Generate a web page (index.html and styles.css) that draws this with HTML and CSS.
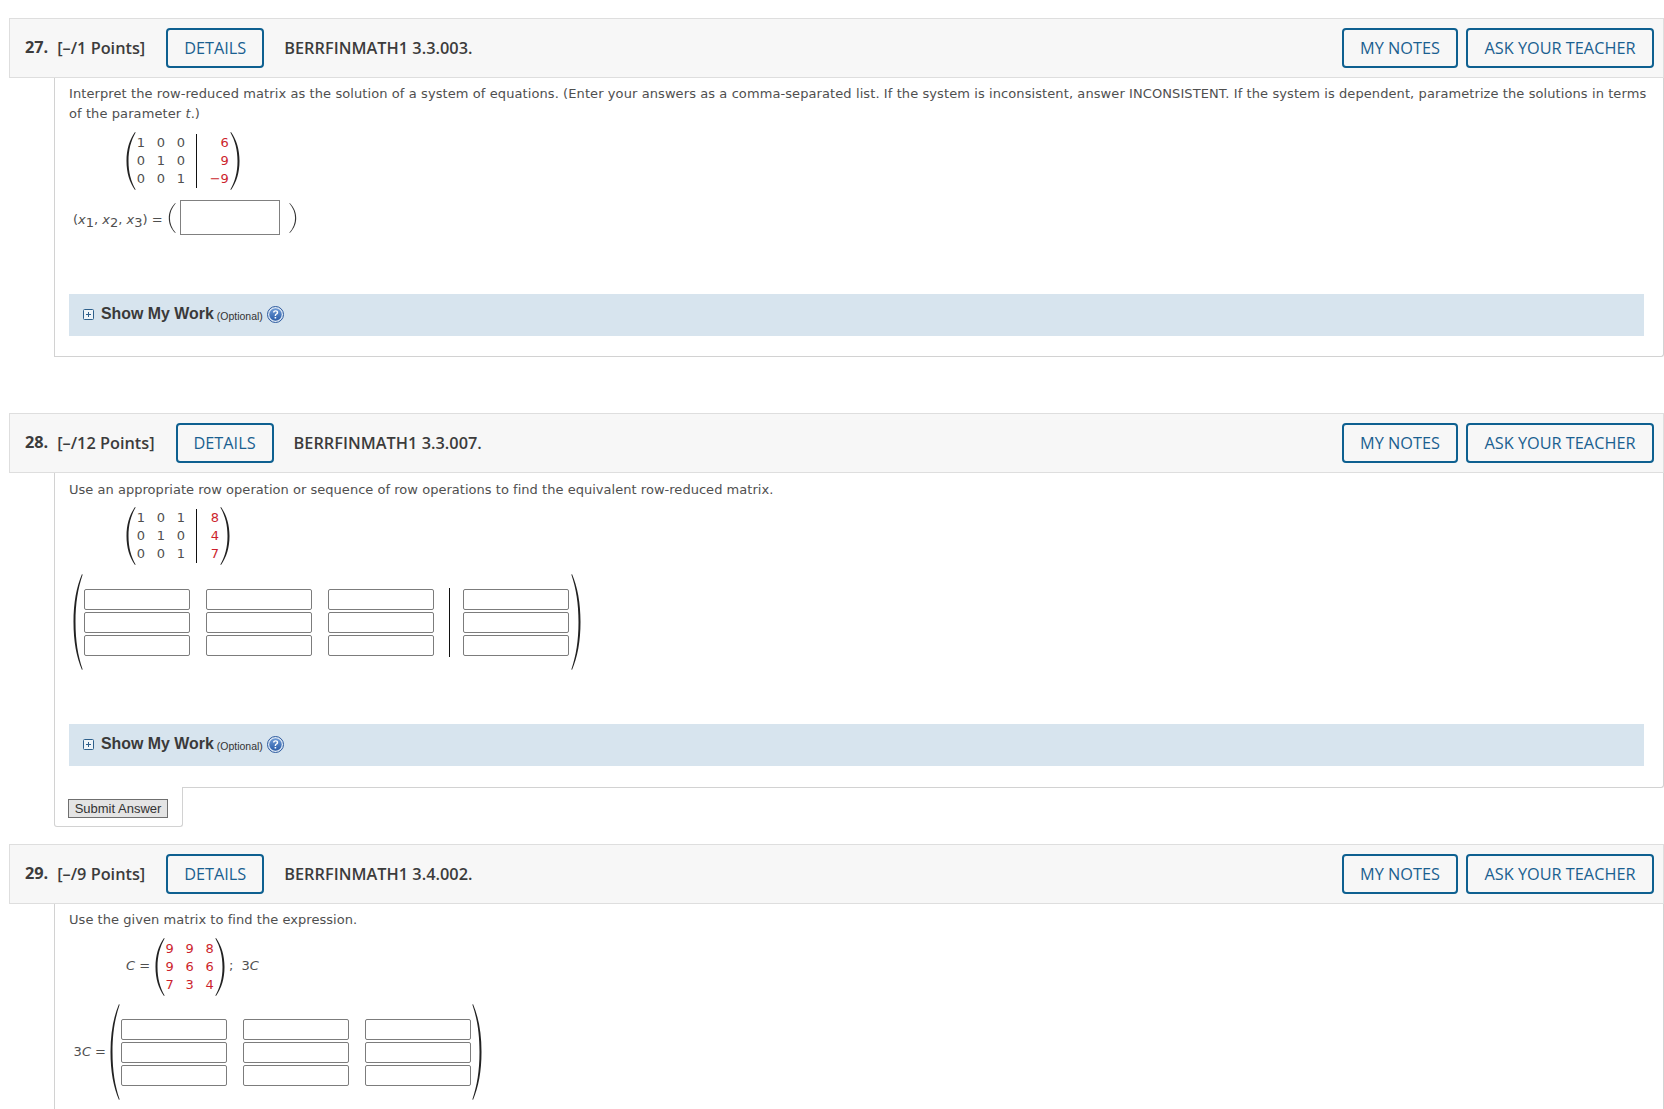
FILE: index.html
```html
<!DOCTYPE html>
<html lang="en">
<head>
<meta charset="utf-8">
<title>Questions</title>
<link rel="stylesheet" href="styles.css">
</head>
<body>
<svg class="defs" width="0" height="0" aria-hidden="true">
  <defs>
    <linearGradient id="helpfill" x1="0" y1="0" x2="0" y2="1"><stop offset="0" stop-color="#6f9bd6"/><stop offset="1" stop-color="#2a5ca8"/></linearGradient>
  </defs>
  <symbol id="lp" viewBox="0 0 10 60" preserveAspectRatio="none"><path d="M9 0C3.5 8 .5 18 .5 30C.5 42 3.5 52 9 60L9.6 59.6C5 51 2.5 42 2.5 30C2.5 18 5 9 9.6 .4Z"/></symbol>
  <symbol id="lpt" viewBox="0 0 10 60" preserveAspectRatio="none"><path d="M9 0C3 10 1 20 1 30C1 40 3 50 9 60L9.6 59.6C4.5 50 2.4 40 2.4 30C2.4 20 4.5 10 9.6 .4Z"/></symbol>
  <symbol id="help" viewBox="0 0 17 17"><circle cx="8.5" cy="8.5" r="8" fill="#dce7f4" stroke="#2c5a9e" stroke-width="1"/><circle cx="8.5" cy="8.5" r="6.2" fill="url(#helpfill)"/><path d="M6 6.6C6.1 5 7.1 4.2 8.6 4.2C10.2 4.2 11.2 5.1 11.2 6.4C11.2 7.4 10.6 8 9.9 8.5C9.2 8.9 9.1 9.2 9.1 10H7.7C7.7 8.9 8 8.4 8.7 7.8C9.4 7.3 9.7 7 9.7 6.4C9.7 5.8 9.3 5.4 8.6 5.4C7.9 5.4 7.5 5.9 7.4 6.6ZM7.6 10.9H9.2V12.5H7.6Z" fill="#fff"/></symbol>
  <symbol id="plus" viewBox="0 0 11 11"><rect x=".5" y=".5" width="10" height="10" rx="1" fill="#eef4f9" stroke="#2d5f8b"/><path d="M3 5.5H8M5.5 3V8" stroke="#2d5f8b" fill="none"/></symbol>
</svg>

<section class="question q27">
  <header class="q-head">
    <span class="q-num">27.</span>
    <span class="q-points">[–/1 Points]</span>
    <button class="btn btn-details">DETAILS</button>
    <span class="q-title">BERRFINMATH1 3.3.003.</span>
    <button class="btn btn-notes">MY NOTES</button>
    <button class="btn btn-ask">ASK YOUR TEACHER</button>
  </header>
  <div class="q-body">
    <p class="prompt">Interpret the row-reduced matrix as the solution of a system of equations. (Enter your answers as a comma-separated list. If the system is inconsistent, answer INCONSISTENT. If the system is dependent, parametrize the solutions in terms of the parameter <i>t</i>.)</p>
    <div class="matrix">
      <svg class="paren"><use href="#lp"/></svg>
      <div class="cells">
        <span>1</span><span>0</span><span>0</span>
        <span>0</span><span>1</span><span>0</span>
        <span>0</span><span>0</span><span>1</span>
      </div>
      <div class="augment">
        <span>6</span><span>9</span><span>−9</span>
      </div>
      <svg class="paren flip"><use href="#lp"/></svg>
    </div>
    <div class="equation">
      <span class="math">(<i>x</i><sub>1</sub>, <i>x</i><sub>2</sub>, <i>x</i><sub>3</sub>) =</span>
      <svg class="paren-thin"><use href="#lpt"/></svg>
      <input class="answer-wide" type="text" aria-label="answer">
      <svg class="paren-thin flip"><use href="#lpt"/></svg>
    </div>
    <div class="show-work">
      <svg class="plus"><use href="#plus"/></svg>
      <span class="sw-label">Show My Work</span>
      <span class="sw-opt">(Optional)</span>
      <svg class="help"><use href="#help"/></svg>
    </div>
  </div>
</section>

<section class="question q28">
  <header class="q-head">
    <span class="q-num">28.</span>
    <span class="q-points">[–/12 Points]</span>
    <button class="btn btn-details">DETAILS</button>
    <span class="q-title">BERRFINMATH1 3.3.007.</span>
    <button class="btn btn-notes">MY NOTES</button>
    <button class="btn btn-ask">ASK YOUR TEACHER</button>
  </header>
  <div class="q-body">
    <p class="prompt">Use an appropriate row operation or sequence of row operations to find the equivalent row-reduced matrix.</p>
    <div class="matrix">
      <svg class="paren"><use href="#lp"/></svg>
      <div class="cells">
        <span>1</span><span>0</span><span>1</span>
        <span>0</span><span>1</span><span>0</span>
        <span>0</span><span>0</span><span>1</span>
      </div>
      <div class="augment">
        <span>8</span><span>4</span><span>7</span>
      </div>
      <svg class="paren flip"><use href="#lp"/></svg>
    </div>
    <div class="big-matrix bm-28">
      <svg class="paren-big"><use href="#lp"/></svg>
      <div class="inputs cols-3">
        <input type="text" aria-label="r1c1"><input type="text" aria-label="r1c2"><input type="text" aria-label="r1c3">
        <input type="text" aria-label="r2c1"><input type="text" aria-label="r2c2"><input type="text" aria-label="r2c3">
        <input type="text" aria-label="r3c1"><input type="text" aria-label="r3c2"><input type="text" aria-label="r3c3">
      </div>
      <div class="inputs cols-1 augmented">
        <input type="text" aria-label="r1c4">
        <input type="text" aria-label="r2c4">
        <input type="text" aria-label="r3c4">
      </div>
      <svg class="paren-big flip"><use href="#lp"/></svg>
    </div>
    <div class="show-work">
      <svg class="plus"><use href="#plus"/></svg>
      <span class="sw-label">Show My Work</span>
      <span class="sw-opt">(Optional)</span>
      <svg class="help"><use href="#help"/></svg>
    </div>
  </div>
  <div class="q-foot"><button class="submit">Submit Answer</button></div>
</section>

<section class="question q29">
  <header class="q-head">
    <span class="q-num">29.</span>
    <span class="q-points">[–/9 Points]</span>
    <button class="btn btn-details">DETAILS</button>
    <span class="q-title">BERRFINMATH1 3.4.002.</span>
    <button class="btn btn-notes">MY NOTES</button>
    <button class="btn btn-ask">ASK YOUR TEACHER</button>
  </header>
  <div class="q-body">
    <p class="prompt">Use the given matrix to find the expression.</p>
    <div class="matrix">
      <span class="math m-lead"><i>C</i> =</span>
      <svg class="paren"><use href="#lp"/></svg>
      <div class="cells red">
        <span>9</span><span>9</span><span>8</span>
        <span>9</span><span>6</span><span>6</span>
        <span>7</span><span>3</span><span>4</span>
      </div>
      <svg class="paren flip"><use href="#lp"/></svg>
      <span class="math m-tail">;&nbsp; 3<i>C</i></span>
    </div>
    <div class="big-matrix bm-29">
      <span class="math bm-lead">3<i>C</i> =</span>
      <svg class="paren-big"><use href="#lp"/></svg>
      <div class="inputs cols-3">
        <input type="text" aria-label="r1c1"><input type="text" aria-label="r1c2"><input type="text" aria-label="r1c3">
        <input type="text" aria-label="r2c1"><input type="text" aria-label="r2c2"><input type="text" aria-label="r2c3">
        <input type="text" aria-label="r3c1"><input type="text" aria-label="r3c2"><input type="text" aria-label="r3c3">
      </div>
      <svg class="paren-big flip"><use href="#lp"/></svg>
    </div>
  </div>
</section>
</body>
</html>
```

FILE: styles.css
```css
html, body { margin: 0; padding: 0; }
body {
  height: 1109px;
  overflow: hidden;
  background: #fff;
  color: #4f4f4f;
  font-family: "DejaVu Sans", Verdana, sans-serif;
  font-size: 13px;
}
.defs { display: block; height: 0; }

.question { margin-left: 9px; }
.q27 { padding-top: 18px; }
.q28 { margin-top: 56px; }
.q29 { margin-top: 17px; }

.q-head {
  box-sizing: border-box;
  height: 60px;
  display: flex;
  align-items: center;
  padding: 0 9px 0 15px;
  background: #f7f7f7;
  border: 1px solid #dedede;
  font-family: "Open Sans", sans-serif;
  font-size: 16.3px;
  color: #3c3c3c;
}
.q-num { font-weight: 700; margin-right: 9px; padding-bottom: 2px; }
.q-points { font-weight: 650; margin-right: 21px; }
.q-title { font-weight: 650; margin-left: 20px; margin-right: auto; letter-spacing: .03px; }

.btn {
  box-sizing: border-box;
  height: 40px;
  padding: 0;
  background: transparent;
  border: 2px solid #0e6090;
  border-radius: 4px;
  color: #1a6090;
  font-family: "Open Sans", sans-serif;
  font-size: 16.3px;
  font-weight: 500;
}
.btn-details { width: 98px; }
.btn-notes { width: 116px; margin-right: 8px; }
.btn-ask { width: 188px; }

.q-body {
  margin-left: 45px;
  padding: 6px 19px 20px 14px;
  border-left: 1px solid #d2d2d2;
  border-right: 1px solid #d2d2d2;
  border-bottom: 1px solid #d2d2d2;
  border-bottom-right-radius: 3px;
}
.q28 .q-body { padding-top: 7px; padding-bottom: 21px; }
.q29 .q-body { border-bottom: 0; padding-bottom: 30px; }

.prompt { margin: 0 -12px 0 0; line-height: 20px; }
.q27 .prompt { letter-spacing: .09px; }
.q28 .prompt { letter-spacing: .03px; }
.q29 .prompt { letter-spacing: .05px; }

.math i { font-style: italic; }
.math sub { font-size: 13px; line-height: 0; vertical-align: -3px; }

.matrix {
  display: flex;
  align-items: center;
  margin: 8px 0 0 57px;
  height: 58px;
}
.q28 .matrix { margin-top: 7px; }

.paren { display: block; width: 10px; height: 58px; fill: #222; flex: none; }
.flip { transform: scaleX(-1); }

.cells {
  display: grid;
  grid-template-columns: repeat(3, 20px);
  grid-auto-rows: 18px;
  margin-left: -5px;
  padding-right: 4.7px;
  text-align: center;
  line-height: 18px;
}
.cells.red { color: #cc1f2d; padding-right: 0; margin-right: -4.2px; margin-left: -5.4px; }

.augment {
  display: grid;
  grid-auto-rows: 18px;
  padding: 0 1px 0 14px;
  border-left: 1px solid #111;
  text-align: right;
  line-height: 18px;
  color: #cc1f2d;
}
.q27 .augment { padding-left: 13px; }

.m-lead { width: 29px; flex: none; padding-bottom: 3px; }
.m-tail { margin-left: 3.5px; padding-bottom: 3px; }

.equation {
  display: flex;
  align-items: center;
  margin-top: 10px;
  height: 35px;
}
.equation .math { margin-left: 4px; margin-right: 5px; padding-top: 3px; }
.paren-thin { display: block; width: 8px; height: 30px; fill: #333; flex: none; }
.answer-wide {
  box-sizing: border-box;
  width: 100px;
  height: 35px;
  margin: 0 9px 0 4px;
  padding: 0;
  background: #fff;
  border: 1px solid #808080;
  border-radius: 0;
}

.big-matrix {
  display: flex;
  align-items: center;
  height: 96px;
}
.bm-28 { margin: 9px 0 0 4px; }
.bm-29 { margin: 8px 0 0 4.6px; }
.bm-lead { width: 36px; flex: none; padding-bottom: 2px; }

.paren-big { display: block; width: 10px; height: 96px; fill: #222; flex: none; }

.inputs {
  display: grid;
  grid-auto-rows: 21px;
  row-gap: 2px;
  margin-left: 1px;
  margin-right: 1.5px;
}
.cols-3 { grid-template-columns: repeat(3, 106px); column-gap: 16px; }
.cols-1 { grid-template-columns: 106px; }
.augmented {
  margin-left: 13px;
  margin-right: 2.5px;
  padding-left: 13px;
  padding-block: 1px;
  border-left: 1px solid #111;
}
.inputs input {
  box-sizing: border-box;
  width: 106px;
  height: 21px;
  margin: 0;
  padding: 0;
  background: #fff;
  border: 1px solid #7c7c7c;
  border-radius: 2px;
}

.show-work {
  box-sizing: border-box;
  height: 42px;
  display: flex;
  align-items: center;
  padding: 0 0 2px 14px;
  background: #d7e4ee;
  font-family: "Liberation Sans", Arial, sans-serif;
}
.q27 .show-work { margin-top: 59px; }
.q28 .show-work { margin-top: 54px; }
.plus { display: block; width: 11px; height: 11px; margin-right: 7px; flex: none; }
.sw-label { font-size: 15.9px; font-weight: 700; color: #3a3a3a; }
.sw-opt { font-size: 10.5px; margin-left: 3px; padding-top: 3px; color: #333; }
.help { display: block; width: 17px; height: 17px; margin-left: 4px; flex: none; }

.q-foot {
  box-sizing: border-box;
  position: relative;
  width: 129px;
  height: 40px;
  margin: -1px 0 0 45px;
  padding: 12px 0 0 13px;
  background: #fff;
  border-left: 1px solid #d2d2d2;
  border-right: 1px solid #d2d2d2;
  border-bottom: 1px solid #d2d2d2;
  border-radius: 0 0 3px 3px;
}
.submit {
  box-sizing: border-box;
  display: block;
  width: 100px;
  height: 19px;
  padding: 0;
  background: #e4e4e4;
  border: 1px solid #6f6f6f;
  border-radius: 0;
  color: #333;
  font-family: "Liberation Sans", Arial, sans-serif;
  font-size: 13px;
  line-height: 17px;
}
```
